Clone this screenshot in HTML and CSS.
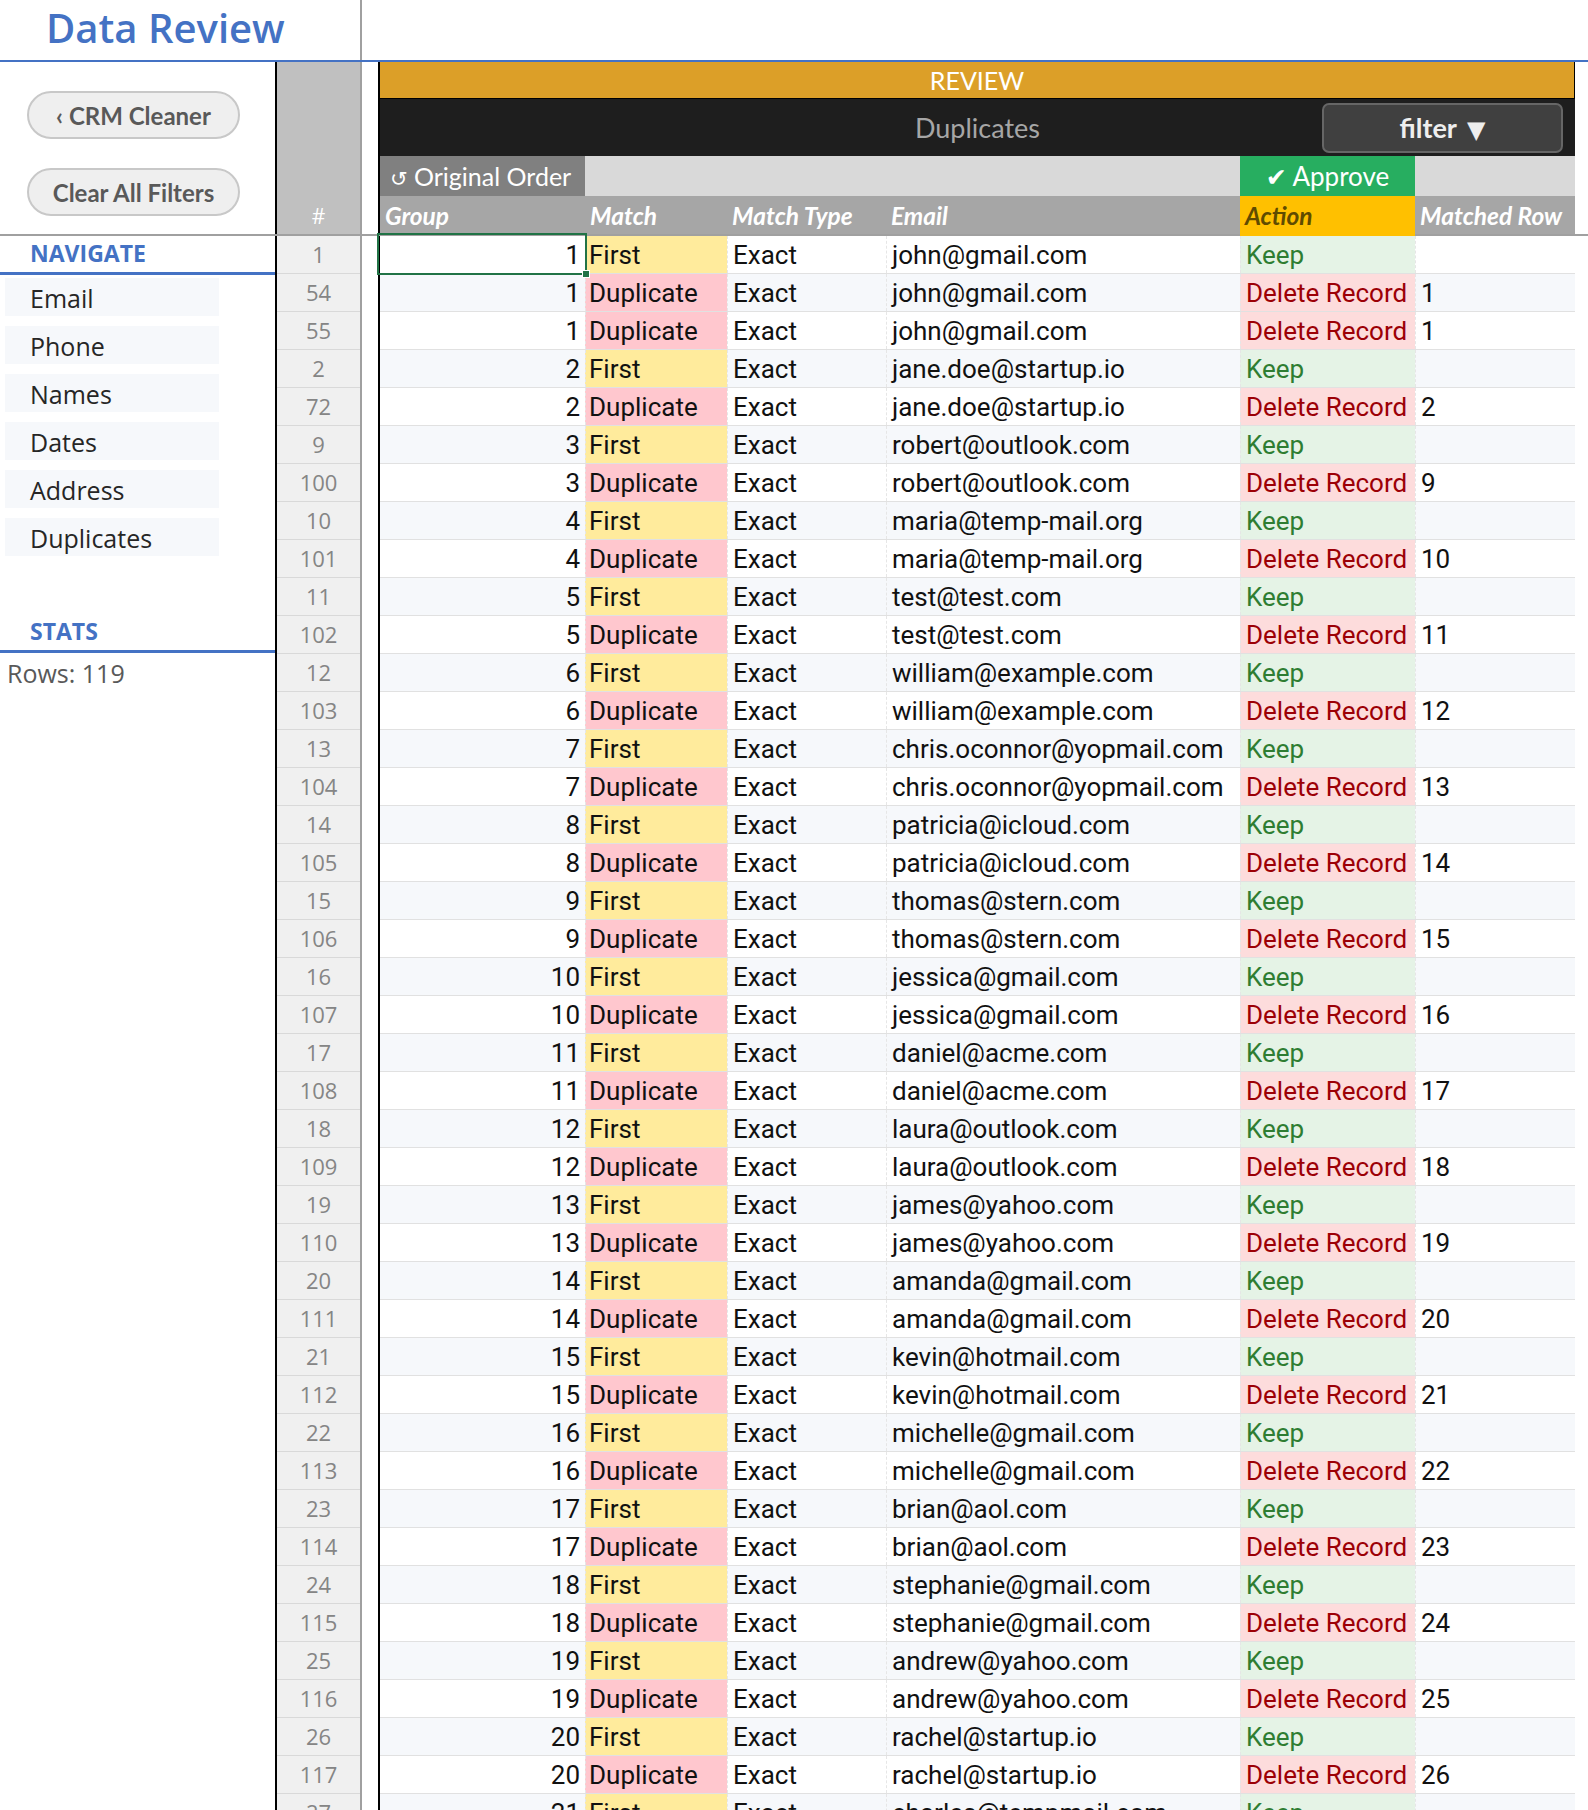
FILE: index.html
```html
<!DOCTYPE html>
<html lang="en">
<head>
<meta charset="utf-8">
<title>Data Review</title>
<link rel="stylesheet" href="styles.css">
</head>
<body>
<div class="sheet">
  <header class="toprow">
    <div class="title-cell">Data Review</div>
    <div class="top-fill"></div>
  </header>

  <section class="head">
    <div class="side-top">
      <button class="pill">‹ CRM Cleaner</button>
      <button class="pill">Clear All Filters</button>
    </div>
    <div class="numhead">#</div>
    <div class="gap"></div>
    <div class="thead">
      <div class="band-review">REVIEW</div>
      <div class="band-dark">
        <div class="band-title">Duplicates</div>
        <button class="filter-btn">filter <span class="tri">▼</span></button>
      </div>
      <div class="trow tools">
        <div class="tool-orig"><span class="sym">↺</span> Original Order</div>
        <div class="tool-fill tool-mid"></div>
        <div class="tool-approve"><span class="sym chk">✔</span> Approve</div>
        <div class="tool-fill"></div>
      </div>
      <div class="trow colhead">
        <div class="h">Group</div>
        <div class="h">Match</div>
        <div class="h">Match Type</div>
        <div class="h">Email</div>
        <div class="h h-action">Action</div>
        <div class="h">Matched Row</div>
      </div>
    </div>
  </section>

  <section class="body">
    <aside class="side-body">
      <div class="sec-head">NAVIGATE</div>
      <nav class="nav">
        <div class="nav-item">Email</div>
        <div class="nav-item">Phone</div>
        <div class="nav-item">Names</div>
        <div class="nav-item">Dates</div>
        <div class="nav-item">Address</div>
        <div class="nav-item">Duplicates</div>
      </nav>
      <div class="sec-head stats">STATS</div>
      <div class="stat">Rows: 119</div>
    </aside>
    <div class="rownums">
      <div>1</div><div>54</div><div>55</div><div>2</div><div>72</div><div>9</div><div>100</div><div>10</div><div>101</div><div>11</div><div>102</div><div>12</div><div>103</div><div>13</div><div>104</div><div>14</div><div>105</div><div>15</div><div>106</div><div>16</div><div>107</div><div>17</div><div>108</div><div>18</div><div>109</div><div>19</div><div>110</div><div>20</div><div>111</div><div>21</div><div>112</div><div>22</div><div>113</div><div>23</div><div>114</div><div>24</div><div>115</div><div>25</div><div>116</div><div>26</div><div>117</div><div>27</div>
    </div>
    <div class="gap"></div>
    <div class="tbody">
      <div class="row"><div class="c grp selected">1<span class="sel"></span><span class="handle"></span></div><div class="c first">First</div><div class="c">Exact</div><div class="c">john@gmail.com</div><div class="c keep">Keep</div><div class="c"></div></div>
      <div class="row"><div class="c grp">1</div><div class="c dup">Duplicate</div><div class="c">Exact</div><div class="c">john@gmail.com</div><div class="c del">Delete Record</div><div class="c">1</div></div>
      <div class="row"><div class="c grp">1</div><div class="c dup">Duplicate</div><div class="c">Exact</div><div class="c">john@gmail.com</div><div class="c del">Delete Record</div><div class="c">1</div></div>
      <div class="row"><div class="c grp">2</div><div class="c first">First</div><div class="c">Exact</div><div class="c">jane.doe@startup.io</div><div class="c keep">Keep</div><div class="c"></div></div>
      <div class="row"><div class="c grp">2</div><div class="c dup">Duplicate</div><div class="c">Exact</div><div class="c">jane.doe@startup.io</div><div class="c del">Delete Record</div><div class="c">2</div></div>
      <div class="row"><div class="c grp">3</div><div class="c first">First</div><div class="c">Exact</div><div class="c">robert@outlook.com</div><div class="c keep">Keep</div><div class="c"></div></div>
      <div class="row"><div class="c grp">3</div><div class="c dup">Duplicate</div><div class="c">Exact</div><div class="c">robert@outlook.com</div><div class="c del">Delete Record</div><div class="c">9</div></div>
      <div class="row"><div class="c grp">4</div><div class="c first">First</div><div class="c">Exact</div><div class="c">maria@temp-mail.org</div><div class="c keep">Keep</div><div class="c"></div></div>
      <div class="row"><div class="c grp">4</div><div class="c dup">Duplicate</div><div class="c">Exact</div><div class="c">maria@temp-mail.org</div><div class="c del">Delete Record</div><div class="c">10</div></div>
      <div class="row"><div class="c grp">5</div><div class="c first">First</div><div class="c">Exact</div><div class="c">test@test.com</div><div class="c keep">Keep</div><div class="c"></div></div>
      <div class="row"><div class="c grp">5</div><div class="c dup">Duplicate</div><div class="c">Exact</div><div class="c">test@test.com</div><div class="c del">Delete Record</div><div class="c">11</div></div>
      <div class="row"><div class="c grp">6</div><div class="c first">First</div><div class="c">Exact</div><div class="c">william@example.com</div><div class="c keep">Keep</div><div class="c"></div></div>
      <div class="row"><div class="c grp">6</div><div class="c dup">Duplicate</div><div class="c">Exact</div><div class="c">william@example.com</div><div class="c del">Delete Record</div><div class="c">12</div></div>
      <div class="row"><div class="c grp">7</div><div class="c first">First</div><div class="c">Exact</div><div class="c">chris.oconnor@yopmail.com</div><div class="c keep">Keep</div><div class="c"></div></div>
      <div class="row"><div class="c grp">7</div><div class="c dup">Duplicate</div><div class="c">Exact</div><div class="c">chris.oconnor@yopmail.com</div><div class="c del">Delete Record</div><div class="c">13</div></div>
      <div class="row"><div class="c grp">8</div><div class="c first">First</div><div class="c">Exact</div><div class="c">patricia@icloud.com</div><div class="c keep">Keep</div><div class="c"></div></div>
      <div class="row"><div class="c grp">8</div><div class="c dup">Duplicate</div><div class="c">Exact</div><div class="c">patricia@icloud.com</div><div class="c del">Delete Record</div><div class="c">14</div></div>
      <div class="row"><div class="c grp">9</div><div class="c first">First</div><div class="c">Exact</div><div class="c">thomas@stern.com</div><div class="c keep">Keep</div><div class="c"></div></div>
      <div class="row"><div class="c grp">9</div><div class="c dup">Duplicate</div><div class="c">Exact</div><div class="c">thomas@stern.com</div><div class="c del">Delete Record</div><div class="c">15</div></div>
      <div class="row"><div class="c grp">10</div><div class="c first">First</div><div class="c">Exact</div><div class="c">jessica@gmail.com</div><div class="c keep">Keep</div><div class="c"></div></div>
      <div class="row"><div class="c grp">10</div><div class="c dup">Duplicate</div><div class="c">Exact</div><div class="c">jessica@gmail.com</div><div class="c del">Delete Record</div><div class="c">16</div></div>
      <div class="row"><div class="c grp">11</div><div class="c first">First</div><div class="c">Exact</div><div class="c">daniel@acme.com</div><div class="c keep">Keep</div><div class="c"></div></div>
      <div class="row"><div class="c grp">11</div><div class="c dup">Duplicate</div><div class="c">Exact</div><div class="c">daniel@acme.com</div><div class="c del">Delete Record</div><div class="c">17</div></div>
      <div class="row"><div class="c grp">12</div><div class="c first">First</div><div class="c">Exact</div><div class="c">laura@outlook.com</div><div class="c keep">Keep</div><div class="c"></div></div>
      <div class="row"><div class="c grp">12</div><div class="c dup">Duplicate</div><div class="c">Exact</div><div class="c">laura@outlook.com</div><div class="c del">Delete Record</div><div class="c">18</div></div>
      <div class="row"><div class="c grp">13</div><div class="c first">First</div><div class="c">Exact</div><div class="c">james@yahoo.com</div><div class="c keep">Keep</div><div class="c"></div></div>
      <div class="row"><div class="c grp">13</div><div class="c dup">Duplicate</div><div class="c">Exact</div><div class="c">james@yahoo.com</div><div class="c del">Delete Record</div><div class="c">19</div></div>
      <div class="row"><div class="c grp">14</div><div class="c first">First</div><div class="c">Exact</div><div class="c">amanda@gmail.com</div><div class="c keep">Keep</div><div class="c"></div></div>
      <div class="row"><div class="c grp">14</div><div class="c dup">Duplicate</div><div class="c">Exact</div><div class="c">amanda@gmail.com</div><div class="c del">Delete Record</div><div class="c">20</div></div>
      <div class="row"><div class="c grp">15</div><div class="c first">First</div><div class="c">Exact</div><div class="c">kevin@hotmail.com</div><div class="c keep">Keep</div><div class="c"></div></div>
      <div class="row"><div class="c grp">15</div><div class="c dup">Duplicate</div><div class="c">Exact</div><div class="c">kevin@hotmail.com</div><div class="c del">Delete Record</div><div class="c">21</div></div>
      <div class="row"><div class="c grp">16</div><div class="c first">First</div><div class="c">Exact</div><div class="c">michelle@gmail.com</div><div class="c keep">Keep</div><div class="c"></div></div>
      <div class="row"><div class="c grp">16</div><div class="c dup">Duplicate</div><div class="c">Exact</div><div class="c">michelle@gmail.com</div><div class="c del">Delete Record</div><div class="c">22</div></div>
      <div class="row"><div class="c grp">17</div><div class="c first">First</div><div class="c">Exact</div><div class="c">brian@aol.com</div><div class="c keep">Keep</div><div class="c"></div></div>
      <div class="row"><div class="c grp">17</div><div class="c dup">Duplicate</div><div class="c">Exact</div><div class="c">brian@aol.com</div><div class="c del">Delete Record</div><div class="c">23</div></div>
      <div class="row"><div class="c grp">18</div><div class="c first">First</div><div class="c">Exact</div><div class="c">stephanie@gmail.com</div><div class="c keep">Keep</div><div class="c"></div></div>
      <div class="row"><div class="c grp">18</div><div class="c dup">Duplicate</div><div class="c">Exact</div><div class="c">stephanie@gmail.com</div><div class="c del">Delete Record</div><div class="c">24</div></div>
      <div class="row"><div class="c grp">19</div><div class="c first">First</div><div class="c">Exact</div><div class="c">andrew@yahoo.com</div><div class="c keep">Keep</div><div class="c"></div></div>
      <div class="row"><div class="c grp">19</div><div class="c dup">Duplicate</div><div class="c">Exact</div><div class="c">andrew@yahoo.com</div><div class="c del">Delete Record</div><div class="c">25</div></div>
      <div class="row"><div class="c grp">20</div><div class="c first">First</div><div class="c">Exact</div><div class="c">rachel@startup.io</div><div class="c keep">Keep</div><div class="c"></div></div>
      <div class="row"><div class="c grp">20</div><div class="c dup">Duplicate</div><div class="c">Exact</div><div class="c">rachel@startup.io</div><div class="c del">Delete Record</div><div class="c">26</div></div>
      <div class="row"><div class="c grp">21</div><div class="c first">First</div><div class="c">Exact</div><div class="c">charles@tempmail.com</div><div class="c keep">Keep</div><div class="c"></div></div>
    </div>
  </section>
</div>
</body>
</html>
```

FILE: styles.css
```css
* { box-sizing: border-box; }
html, body { margin: 0; padding: 0; }
body {
  width: 1588px;
  height: 1810px;
  overflow: hidden;
  background: #ffffff;
  font-family: Roboto, "Liberation Sans", sans-serif;
}

.sheet { display: flex; flex-direction: column; height: 1810px; }

/* ---------- title row ---------- */
.toprow {
  display: flex;
  height: 62px;
  border-bottom: 2px solid #4472c4;
  flex: none;
}
.title-cell {
  width: 362px;
  border-right: 2px solid #a0a0a0;
  padding-left: 46px;
  padding-top: 2px;
  font-family: "Open Sans", sans-serif;
  font-weight: 600;
  font-size: 40px;
  line-height: 52px;
  color: #4472c4;
  white-space: nowrap;
}
.top-fill { flex: 1; }

/* ---------- frozen header ---------- */
.head {
  display: flex;
  height: 174px;
  border-bottom: 2px solid #a0a0a0;
  flex: none;
}
.side-top {
  width: 277px;
  border-right: 2px solid #000;
  display: flex;
  flex-direction: column;
  gap: 29px;
  padding: 29px 0 0 27px;
}
.pill {
  width: 213px;
  height: 48px;
  border: 2px solid #c8c8c8;
  border-radius: 24px;
  background: #efefef;
  color: #595959;
  font-family: Lato, "Open Sans", sans-serif;
  font-weight: 700;
  font-size: 24px;
  padding: 0;
  text-align: center;
}
.numhead {
  width: 85px;
  background: #c0c0c0;
  border-right: 2px solid #a0a0a0;
  color: #ffffff;
  font-family: "Open Sans", sans-serif;
  font-size: 21px;
  text-align: center;
  display: flex;
  align-items: flex-end;
  justify-content: center;
  padding-bottom: 4px;
}
.gap { width: 16px; flex: none; }
.thead {
  width: 1197px;
  border-left: 2px solid #000;
  display: flex;
  flex-direction: column;
}
.band-review {
  height: 37px;
  background: #dc9f28;
  border-bottom: 1px solid #000;
  border-right: 1px solid #000;
  color: #ffffff;
  text-align: center;
  font-family: Lato, sans-serif;
  font-size: 25px;
  line-height: 36px;
}
.band-dark {
  height: 57px;
  background: #1e1e1e;
  display: grid;
  grid-template-columns: 1fr auto 1fr;
  align-items: center;
}
.band-title {
  grid-column: 2;
  color: #a6a6a6;
  font-family: Lato, sans-serif;
  font-size: 27px;
}
.filter-btn {
  grid-column: 3;
  justify-self: end;
  margin-right: 12px;
  width: 241px;
  height: 50px;
  background: #404040;
  border: 2px solid #666666;
  border-radius: 7px;
  color: #eeeeee;
  font-family: Lato, sans-serif;
  font-weight: 700;
  font-size: 27px;
  padding: 0;
}
.filter-btn .tri {
  font-family: "DejaVu Sans", sans-serif;
  font-size: 24px;
  margin-left: 4px;
}

.trow {
  display: grid;
  grid-template-columns: 205px 142px 159px 354px 175px 160px;
}
.tools { height: 40px; }
.tool-orig {
  background: #808080;
  color: #ffffff;
  font-family: Lato, sans-serif;
  font-size: 25px;
  line-height: 40px;
  padding-left: 10px;
  white-space: nowrap;
}
.sym { font-family: "DejaVu Sans", sans-serif; font-size: 21px; }
.chk { font-size: 25px; }
.tool-fill { background: #d9d9d9; }
.tool-mid { grid-column: 2 / span 3; }
.tool-approve {
  background: #27ae60;
  color: #ffffff;
  text-align: center;
  font-family: Lato, sans-serif;
  font-size: 26px;
  line-height: 40px;
  white-space: nowrap;
}
.colhead { height: 38px; background: #a6a6a6; }
.h {
  color: #ffffff;
  font-family: Lato, sans-serif;
  font-style: italic;
  font-weight: 700;
  font-size: 24.5px;
  line-height: 40px;
  padding-left: 5px;
  white-space: nowrap;
}
.h-action { background: #ffc000; color: #5f4b00; }

/* ---------- body ---------- */
.body { display: flex; flex: 1; min-height: 0; }
.side-body {
  width: 277px;
  border-right: 2px solid #000;
  font-family: "Open Sans", sans-serif;
}
.sec-head {
  height: 39px;
  border-bottom: 3px solid #4472c4;
  color: #4472c4;
  font-weight: 700;
  font-size: 23px;
  line-height: 35px;
  padding-left: 30px;
}
.sec-head.stats { margin-top: 58px; }
.nav {
  display: flex;
  flex-direction: column;
  gap: 10px;
  padding: 3px 0 0 5px;
}
.nav-item {
  width: 214px;
  height: 38px;
  background: #f6f8fb;
  color: #262626;
  font-size: 25px;
  line-height: 40px;
  padding-left: 25px;
}
.stat {
  color: #595959;
  font-size: 25px;
  line-height: 40px;
  padding-left: 7px;
}
.rownums {
  width: 85px;
  border-right: 2px solid #a0a0a0;
  background: #f0f0f0;
  flex: none;
}
.rownums div {
  height: 38px;
  border-bottom: 1px solid #d9d9d9;
  text-align: center;
  color: #858585;
  font-family: "Open Sans", sans-serif;
  font-size: 22px;
  line-height: 37px;
}
.tbody { width: 1197px; border-left: 2px solid #000; flex: none; }
.row {
  display: grid;
  grid-template-columns: 205px 142px 159px 354px 175px 160px;
  height: 38px;
  border-bottom: 1px solid #e1e1e1;
}
.row:nth-child(even) { background: #f6f8fb; }
.c {
  font-size: 26px;
  line-height: 35px;
  padding: 2px 5px 0 5px;
  color: #111111;
  white-space: nowrap;
  overflow: hidden;
}
.c + .c { border-left: 1px dashed #e6e6e6; }
.grp { text-align: right; padding-right: 5px; }
.first { background: #ffeb9c; padding-left: 3px; }
.dup { background: #ffc7ce; padding-left: 3px; }
.keep { background: #e5f3e6; color: #2e7d32; }
.del { background: #fddcdc; color: #9c0006; }

.selected { position: relative; overflow: visible; }
.sel {
  position: absolute;
  left: -3px; top: -3px; right: -2px; bottom: -2px;
  border: 2px solid #217346;
  pointer-events: none;
}
.handle {
  position: absolute;
  right: -5px; bottom: -5px;
  width: 8px; height: 8px;
  background: #217346;
  border: 1px solid #ffffff;
}
```
